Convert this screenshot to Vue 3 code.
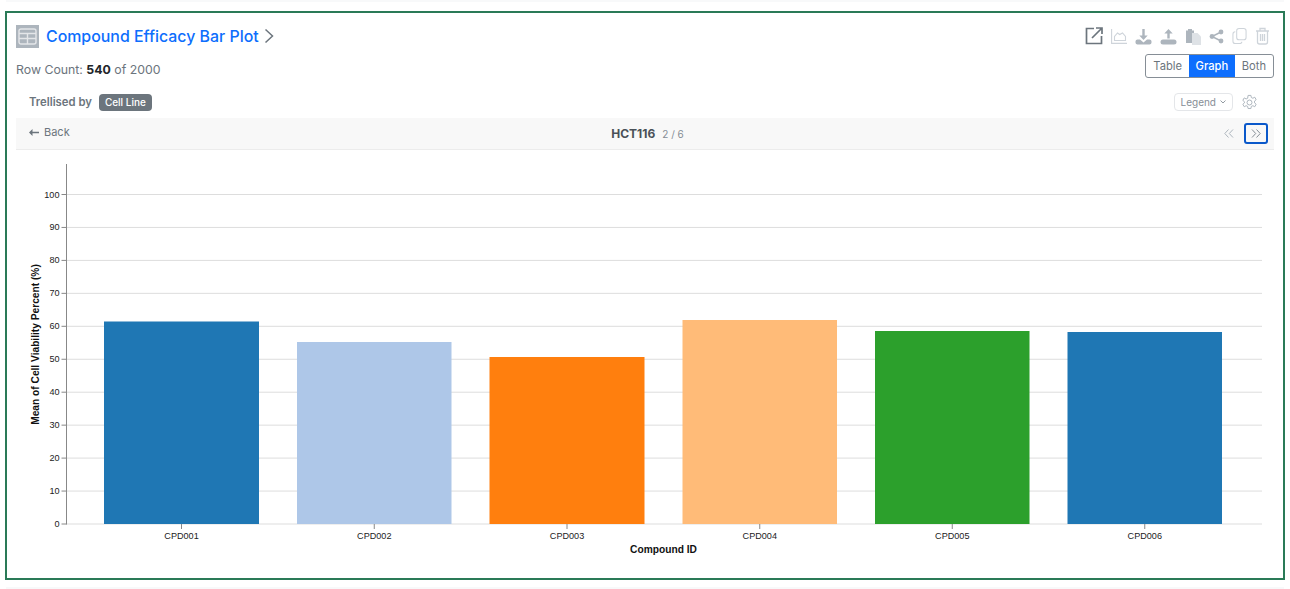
<script setup>
const ticks = [0,10,20,30,40,50,60,70,80,90,100].map(v => ({ v, y: 524 - v * 3.295 }))
const bars = [
  { id: 'CPD001', x: 104, w: 155, top: 321.5, color: '#1f77b4' },
  { id: 'CPD002', x: 297, w: 154.5, top: 342, color: '#aec7e8' },
  { id: 'CPD003', x: 489.5, w: 155, top: 357, color: '#ff7f0e' },
  { id: 'CPD004', x: 682.5, w: 154.5, top: 320, color: '#ffbb78' },
  { id: 'CPD005', x: 875, w: 154.5, top: 331, color: '#2ca02c' },
  { id: 'CPD006', x: 1067.5, w: 154.5, top: 332, color: '#1f77b4' },
]
</script>

<template>
  <div class="page">
    <div class="band"></div>
    <section class="panel">
      <header class="head">
        <div class="title-wrap">
          <span class="table-ico">
            <svg width="19" height="17" viewBox="0 0 19 17" fill="none" stroke="#e4e6e9" stroke-width="1.4">
              <rect x="1" y="1" width="17" height="15" rx="2" />
              <path d="M1 5.5h17M1 10.5h17M9.5 5.5v10.5" />
            </svg>
          </span>
          <h1 class="title">Compound Efficacy Bar Plot</h1>
          <svg class="chev" width="10" height="16" viewBox="0 0 10 16" fill="none" stroke="#6c757d" stroke-width="1.5">
            <path d="M1.5 1.5 8.5 8l-7 6.5" />
          </svg>
        </div>
        <div class="tools">
          <svg width="18" height="18" viewBox="0 0 18 18" fill="none" stroke="#6c757d" stroke-width="1.7">
            <path d="M9 1.500H1.500v15h15V9M7 11 16.500 1.500M11 1h6v6" />
          </svg>
          <svg width="16" height="15" viewBox="0 0 16 15" fill="none" stroke="#ced4da" stroke-width="1.100">
            <path d="M.6 0v14.400H16M3.500 11.500V7.500L6.500 4l2.200 1.500L11.500 4l3 3.500v4z" />
          </svg>
          <svg width="17" height="17" viewBox="0 0 17 17" fill="#adb5bd">
            <path d="M7.300 1h2.400v6.500h3L8.500 12 4.300 7.500h3z" />
            <path d="M0.500 13.500c0-1.200 1-2 2-2h2.500l3.500 3 3.500-3H14.500c1 0 2 .8 2 2v1c0 1.200-1 2-2 2h-12c-1 0-2-.8-2-2z" />
          </svg>
          <svg width="17" height="17" viewBox="0 0 17 17" fill="#adb5bd">
            <path d="M7.300 10.500h2.400V5.500h3L8.500 1 4.300 5.500h3z" />
            <rect x="0.500" y="11.500" width="16" height="5" rx="2.500" />
          </svg>
          <svg width="16" height="17" viewBox="0 0 16 17">
            <path d="M1 2.500h2V1h4v1.500h2V15H1z" fill="#adb5bd" />
            <path d="M7 5h5.500L16 8.500V17H7z" fill="#dee2e6" />
          </svg>
          <svg width="15" height="15" viewBox="0 0 15 15" fill="#adb5bd" stroke="#adb5bd" stroke-width="1.500">
            <circle cx="3" cy="7.500" r="2.400" stroke="none" />
            <circle cx="12" cy="3" r="2.400" stroke="none" />
            <circle cx="12" cy="12" r="2.400" stroke="none" />
            <path d="M12 3 3 7.500l9 4.500" fill="none" />
          </svg>
          <svg width="15" height="18" viewBox="0 0 16 18" fill="none" stroke="#ced4da" stroke-width="1.100">
            <rect x="5" y="1" width="10" height="12" rx="2.500" />
            <path d="M3.500 4.500C2 4.500 1 5.500 1 7v7.500C1 16 2 17 3.500 17H8c1.500 0 2.500-1 2.500-2" />
          </svg>
          <svg width="15" height="18" viewBox="0 0 15 18" fill="none" stroke="#ced4da" stroke-width="1.300">
            <path d="M1 4h13M5 4V1.500h5V4M2.500 4v11c0 1.200.8 2 2 2h6c1.200 0 2-.8 2-2V4M5.500 7v7M7.500 7v7M9.500 7v7" />
          </svg>
        </div>
      </header>

      <div class="sub">
        <p class="count">Row Count: <b>540</b> of 2000</p>
        <div class="toggle">
          <span class="t-table">Table</span>
          <span class="on">Graph</span>
          <span class="t-both">Both</span>
        </div>
      </div>

      <div class="trellis">
        <div class="trellis-left">
          <span class="by">Trellised by</span>
          <span class="badge">Cell Line</span>
        </div>
        <div class="trellis-right">
          <span class="legend">Legend
            <svg width="6" height="4" viewBox="0 0 6 4" fill="none" stroke="#868e96" stroke-width="0.900"><path d="M.5.500 3 3 5.500.500" /></svg>
          </span>
          <svg width="17" height="17" viewBox="0 0 24 24" fill="none" stroke="#adb5bd" stroke-width="1.400" stroke-linejoin="round">
            <circle cx="12" cy="12" r="3.500" />
            <path d="M10 2h4l.6 3 2.200 1 2.600-1.500 2 3.500-2.300 2v2.500l2.300 2-2 3.500-2.600-1.500-2.200 1-.6 3h-4l-.6-3-2.200-1-2.600 1.500-2-3.500 2.300-2V11l-2.300-2 2-3.500L7.200 7l2.200-1z" />
          </svg>
        </div>
      </div>

      <nav class="navbar">
        <span class="back"><svg width="10" height="7" viewBox="0 0 10 7" fill="#6c757d"><path d="M3.500 0v2.700H10v1.600H3.500V7L0 3.500z" /></svg>Back</span>
        <span class="center"><b>HCT116</b><span class="pg">2 / 6</span></span>
        <span class="pager">
          <span class="pbtn">
            <svg width="10" height="9" viewBox="0 0 10 9" fill="none" stroke="#adb5bd" stroke-width="1"><path d="M4.500.500.800 4.500l3.700 4M9 .500 5.300 4.500 9 8.500" /></svg>
          </span>
          <span class="pbtn focus">
            <svg width="10" height="9" viewBox="0 0 10 9" fill="none" stroke="#868e96" stroke-width="1"><path d="M1 .500l3.700 4-3.700 4M5.500 .500l3.700 4-3.700 4" /></svg>
          </span>
        </span>
      </nav>

      <svg class="chart" width="1276" height="428" viewBox="7 150 1276 428">
        <g stroke="#dddddd" stroke-width="1">
          <line v-for="t in ticks" :key="t.v" x1="66" x2="1262" :y1="t.y" :y2="t.y" />
        </g>
        <rect v-for="b in bars" :key="b.id" :x="b.x" :y="b.top" :width="b.w" :height="524 - b.top" :fill="b.color" />
        <line x1="66.500" x2="66.500" y1="164" y2="524.500" stroke="#888888" />
        <g stroke="#888888">
          <line v-for="t in ticks" :key="'k' + t.v" x1="61.500" x2="66.500" :y1="t.y" :y2="t.y" />
          <line v-for="b in bars" :key="'m' + b.id" :x1="b.x + b.w / 2" :x2="b.x + b.w / 2" y1="524" y2="529" />
        </g>
        <g class="tick-label">
          <text v-for="t in ticks" :key="'l' + t.v" x="59.500" :y="t.y + 3" text-anchor="end">{{ t.v }}</text>
          <text v-for="b in bars" :key="'x' + b.id" :x="b.x + b.w / 2" y="539" text-anchor="middle">{{ b.id }}</text>
        </g>
        <text class="axis-title" x="663.500" y="553" text-anchor="middle">Compound ID</text>
        <text class="axis-title" transform="translate(39 344.500) rotate(-90)" text-anchor="middle">Mean of Cell Viability Percent (%)</text>
      </svg>
    </section>
    <div class="band low"></div>
  </div>
</template>

<style scoped>
.page {
  width: 1290px;
  height: 589px;
  box-sizing: border-box;
  padding: 0 5px;
  font-family: Inter, "Liberation Sans", sans-serif;
  background: #fff;
  overflow: hidden;
}
.band {
  height: 2px;
  margin: 0 1px 9px;
  background: #f8f9fa;
}
.band.low {
  margin: 7px 1px 0;
}
.panel {
  box-sizing: border-box;
  width: 1280px;
  height: 569px;
  border: 2px solid #2a7a57;
  display: flex;
  flex-direction: column;
}
.head {
  display: flex;
  justify-content: space-between;
  align-items: center;
  height: 26px;
  margin-top: 10px;
  padding: 0 13px 0 9px;
}
.title-wrap {
  display: flex;
  align-items: center;
}
.table-ico {
  width: 23px;
  height: 23px;
  background: #adb5bd;
  display: flex;
  align-items: center;
  justify-content: center;
  margin-right: 7px;
}
.title {
  margin: 2px 0 0;
  font-size: 15.900px;
  font-weight: 500;
  color: #0d6efd;
  line-height: 24px;
}
.chev { margin-left: 5px; }
.tools {
  display: flex;
  align-items: center;
  gap: 8px;
}
.sub {
  display: flex;
  justify-content: space-between;
  padding: 0 9px;
  height: 24px;
  margin-top: 5px;
}
.count {
  margin: 0;
  align-self: flex-end;
  font-size: 12.300px;
  line-height: 16px;
  color: #6c757d;
}
.count b {
  color: #212529;
  font-weight: 700;
}
.toggle {
  display: flex;
  height: 24px;
  box-sizing: border-box;
  border: 1px solid #868e96;
  border-radius: 3px;
  font-size: 11.200px;
  color: #6c757d;
  overflow: hidden;
}
.toggle span {
  display: flex;
  align-items: center;
  padding: 0 6.500px;
}
.toggle .t-table,
.toggle .t-both { padding: 0 7px; }
.toggle .on {
  background: #0d6efd;
  color: #fff;
  font-weight: 500;
}
.trellis {
  display: flex;
  justify-content: space-between;
  align-items: center;
  height: 22px;
  margin-top: 13px;
  padding: 0 25px 0 22px;
}
.trellis-left {
  display: flex;
  align-items: center;
  gap: 7px;
}
.by {
  font-size: 11.300px;
  font-weight: 600;
  color: #6c757d;
}
.badge {
  background: #6c757d;
  color: #fff;
  font-size: 10px;
  font-weight: 500;
  padding: 2px 6px;
  border-radius: 4px;
  line-height: 13px;
}
.trellis-right {
  display: flex;
  align-items: center;
  gap: 8px;
}
.legend {
  display: flex;
  align-items: center;
  gap: 4px;
  height: 18px;
  box-sizing: border-box;
  border: 1px solid #e4e6e9;
  border-radius: 4px;
  padding: 0 6px;
  font-size: 10px;
  color: #868e96;
}
.navbar {
  display: grid;
  grid-template-columns: 1fr auto 1fr;
  align-items: center;
  box-sizing: border-box;
  height: 32px;
  margin: 5px 9px 0;
  padding: 0 6px 0 13px;
  background: #f8f8f8;
  border-bottom: 1px solid #ececec;
}
.back {
  display: flex;
  align-items: center;
  gap: 5px;
  margin-bottom: 3px;
  font-size: 11px;
  color: #6c757d;
}
.center {
  margin: 0 2px 1px 0;
  font-size: 12px;
  color: #495057;
}
.center b { font-weight: 700; }
.pg {
  margin-left: 7px;
  font-size: 10px;
  color: #868e96;
}
.pager {
  display: flex;
  justify-content: flex-end;
  align-items: center;
  gap: 3px;
}
.pbtn {
  width: 24px;
  height: 21px;
  box-sizing: border-box;
  display: flex;
  align-items: center;
  justify-content: center;
}
.pbtn.focus {
  border: 2px solid #0a58ca;
  border-radius: 3px;
}
.chart {
  display: block;
  flex: none;
}
.tick-label text {
  font-family: "Liberation Sans", Arial, sans-serif;
  font-size: 9.100px;
  fill: #222;
}
.axis-title {
  font-family: "Liberation Sans", Arial, sans-serif;
  font-size: 10.200px;
  font-weight: 700;
  fill: #111;
}
</style>

<style>
html, body { margin: 0; background: #fff; }
</style>
